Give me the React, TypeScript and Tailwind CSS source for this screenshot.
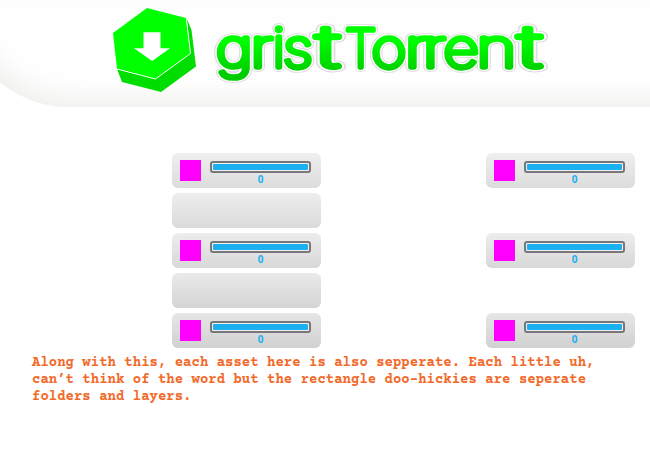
import React from "react";

type Glyph = { ch: string; x: number; sx: number; sy: number };

const glyphs: Glyph[] = [
  { ch: "g", x: 216, sx: 1.24, sy: 1.02 },
  { ch: "r", x: 250.5, sx: 1.34, sy: 1.02 },
  { ch: "i", x: 272.8, sx: 1.1, sy: 1.06 },
  { ch: "s", x: 283, sx: 1.18, sy: 1.02 },
  { ch: "t", x: 316.5, sx: 1.85, sy: 1.1 },
  { ch: "T", x: 345, sx: 1, sy: 1.03 },
  { ch: "o", x: 371.5, sx: 1.18, sy: 1.02 },
  { ch: "r", x: 405, sx: 1.35, sy: 1.02 },
  { ch: "r", x: 423, sx: 1.35, sy: 1.02 },
  { ch: "e", x: 443.5, sx: 1.21, sy: 1.02 },
  { ch: "n", x: 476.5, sx: 1.34, sy: 1.02 },
  { ch: "t", x: 518.5, sx: 1.85, sy: 1.1 },
];

function Logo() {
  return (
    <svg width="650" height="107" viewBox="0 0 650 107" className="block" role="img" aria-label="gristTorrent">
      <defs>
        <linearGradient id="green" gradientUnits="userSpaceOnUse" x1="0" y1="-26" x2="0" y2="6">
          <stop offset="0" stopColor="#00ff00" />
          <stop offset="1" stopColor="#00cc00" />
        </linearGradient>
      </defs>
      <path d="M186.5 18 191.5 30 196 66.5 161 92 122 82 117 69 155.5 79 190.5 53.5Z" fill="#00dd00" />
      <path d="M147 8 186 18 190.5 53.5 155.5 79 117 69 113 33Z" fill="#00ff00" />
      <path d="M117 69 155.5 79 190.5 53.5 186.3 18" fill="none" stroke="#f4fff4" strokeWidth="1" />
      <path d="M143.5 32.3h17v16h9.5L152.2 61 134 48.3h9.5Z" fill="#fff" />
      <g strokeLinejoin="round" strokeLinecap="round">
        <use href="#word" stroke="#dcdcdf" strokeWidth="9.4" />
        <use href="#word" stroke="#ffffff" strokeWidth="7.6" />
        <g stroke="url(#green)" fill="url(#green)" strokeWidth="5.2">
          <g id="word">
            {glyphs.map((l, i) => (
              <text
                key={i}
                transform={`translate(${l.x} 67) scale(${l.sx} ${l.sy})`}
                className="font-['Inter',sans-serif] text-[51px] font-thin"
              >
                {l.ch}
              </text>
            ))}
          </g>
        </g>
      </g>
    </svg>
  );
}

function Panel({ tone, empty = false }: { tone: string; empty?: boolean }) {
  return (
    <div className={`flex h-[35px] w-[149px] rounded-md bg-linear-to-b pt-[7px] pl-2 ${tone}`}>
      {!empty && (
        <>
          <div className="size-[21px] bg-[#ff00ff]" />
          <div className="mt-px ml-[9px] w-[101px]">
            <div className="h-3 rounded-[3px] border-2 border-[#77777a] bg-[#f0f0f0] p-px">
              <div className="h-full rounded-[1px] bg-[#1cb0f0]" />
            </div>
            <div className="text-center font-['Open_Sans',sans-serif] text-[10px] leading-[13px] font-bold text-[#1cb0f0]">0</div>
          </div>
        </>
      )}
    </div>
  );
}

const tones = [
  "from-[#efefef] to-[#dcdcdc]",
  "from-[#eeeeee] to-[#dadada]",
  "from-[#ededed] to-[#d8d8d8]",
  "from-[#e9eae9] to-[#d4d4d4]",
  "from-[#e6e6e6] to-[#d1d1d1]",
];

export default function App() {
  return (
    <div className="h-[450px] w-[650px] overflow-hidden bg-white">
      <header className="-ml-[37px] h-[107px] w-[760px] rounded-bl-[105px] bg-[#fefefe] pl-[37px] shadow-[inset_8px_-12px_24px_-4px_#efefed]">
        <Logo />
      </header>
      <main>
        <div className="mt-[46px] ml-[172px] flex gap-[165px]">
          <div className="flex h-[195px] flex-col justify-between">
            {tones.map((tone, i) => (
              <Panel key={i} tone={tone} empty={i % 2 === 1} />
            ))}
          </div>
          <div className="flex h-[195px] flex-col justify-between">
            <Panel tone={tones[0]} />
            <Panel tone={tones[2]} />
            <Panel tone={tones[4]} />
          </div>
        </div>
        <p className="mt-[7px] ml-8 font-['Courier_Prime','Liberation_Mono',monospace] text-[14px] leading-[17px] font-bold whitespace-nowrap text-[#f26a2a]">
          Along with this, each asset here is also sepperate. Each little uh,
          <br />
          can’t think of the word but the rectangle doo-hickies are seperate
          <br />
          folders and layers.
        </p>
      </main>
    </div>
  );
}
